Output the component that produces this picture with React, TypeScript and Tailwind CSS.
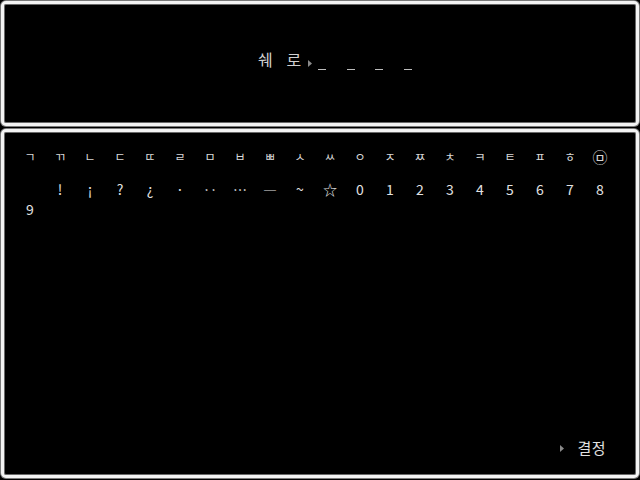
const FONT = { fontFamily: '"Noto Sans CJK KR", "Noto Sans", sans-serif' };

const JAMO = [
  "ㄱ", "ㄲ", "ㄴ", "ㄷ", "ㄸ", "ㄹ", "ㅁ", "ㅂ", "ㅃ", "ㅅ",
  "ㅆ", "ㅇ", "ㅈ", "ㅉ", "ㅊ", "ㅋ", "ㅌ", "ㅍ", "ㅎ",
];

const SYMBOLS = [
  " ", "!", "¡", "?", "¿", "·", "‥", "…", "―", "~",
  "☆", "0", "1", "2", "3", "4", "5", "6", "7", "8",
];

function Cursor() {
  return (
    <svg width="4" height="7" viewBox="0 0 4 7" className="block">
      <polygon points="0,0 4,3.5 0,7" fill="#8a8a8a" />
    </svg>
  );
}

function Window({ className, children }: { className: string; children: React.ReactNode }) {
  return (
    <div
      className={
        "border-[3px] border-[#f4f4f4] rounded-[5px] bg-black shadow-[inset_0_0_0_1px_#6a6a6a,0_0_0_1px_#7a7a7a] " +
        className
      }
    >
      {children}
    </div>
  );
}

export default function App() {
  const name = ["쉐", "로"];
  const slots = 4;

  return (
    <div className="w-[640px] h-[480px] bg-black p-[1px] pb-[2px] flex flex-col gap-[3px] text-[#e2e2e2]" style={FONT}>
      {/* NAME FIELD */}
      <Window className="h-[125px] pt-[44px] pl-[247px]">
        <div className="flex">
          {name.map((c, i) => (
            <div key={i} className="relative w-[28.5px] h-[22px] flex justify-center items-end">
              <span className="text-[16px] leading-[22px] text-[#d0d0d0]">{c}</span>
              {i === name.length - 1 && (
                <div className="absolute left-full top-[12px]">
                  <Cursor />
                </div>
              )}
            </div>
          ))}
          {Array.from({ length: slots }).map((_, i) => (
            <div key={i} className="w-[28.5px] h-[22px] flex justify-center items-end">
              <div className="w-[8px] h-[1px] bg-[#bdbdbd]" />
            </div>
          ))}
        </div>
      </Window>

      {/* CHARACTER TABLE */}
      <Window className="flex-1 flex flex-col pt-[15px] pl-[11px] pr-[6px] pb-[17px]">
        <div className="flex h-[20px] items-center">
          {JAMO.map((c, i) => (
            <div key={i} className="w-[30px] shrink-0 text-center text-[12px] leading-[20px] text-[#d8d8d8]">
              {c}
            </div>
          ))}
          <div className="w-[30px] shrink-0 text-center text-[15px] leading-[20px] text-[#d8d8d8]">㉤</div>
        </div>

        <div className="flex h-[20px] mt-[12px] items-center">
          {SYMBOLS.map((c, i) => (
            <div key={i} className="w-[30px] shrink-0 text-center text-[14px] leading-[20px] whitespace-pre">
              {c}
            </div>
          ))}
        </div>

        <div className="flex h-[20px] items-center">
          <div className="w-[30px] shrink-0 text-center text-[14px] leading-[20px]">9</div>
        </div>

        <div className="mt-auto flex items-center justify-end h-[20px] pr-[24px]">
          <Cursor />
          <span className="ml-[13px] text-[15px] leading-[20px] tracking-[0.5px]">결정</span>
        </div>
      </Window>
    </div>
  );
}
